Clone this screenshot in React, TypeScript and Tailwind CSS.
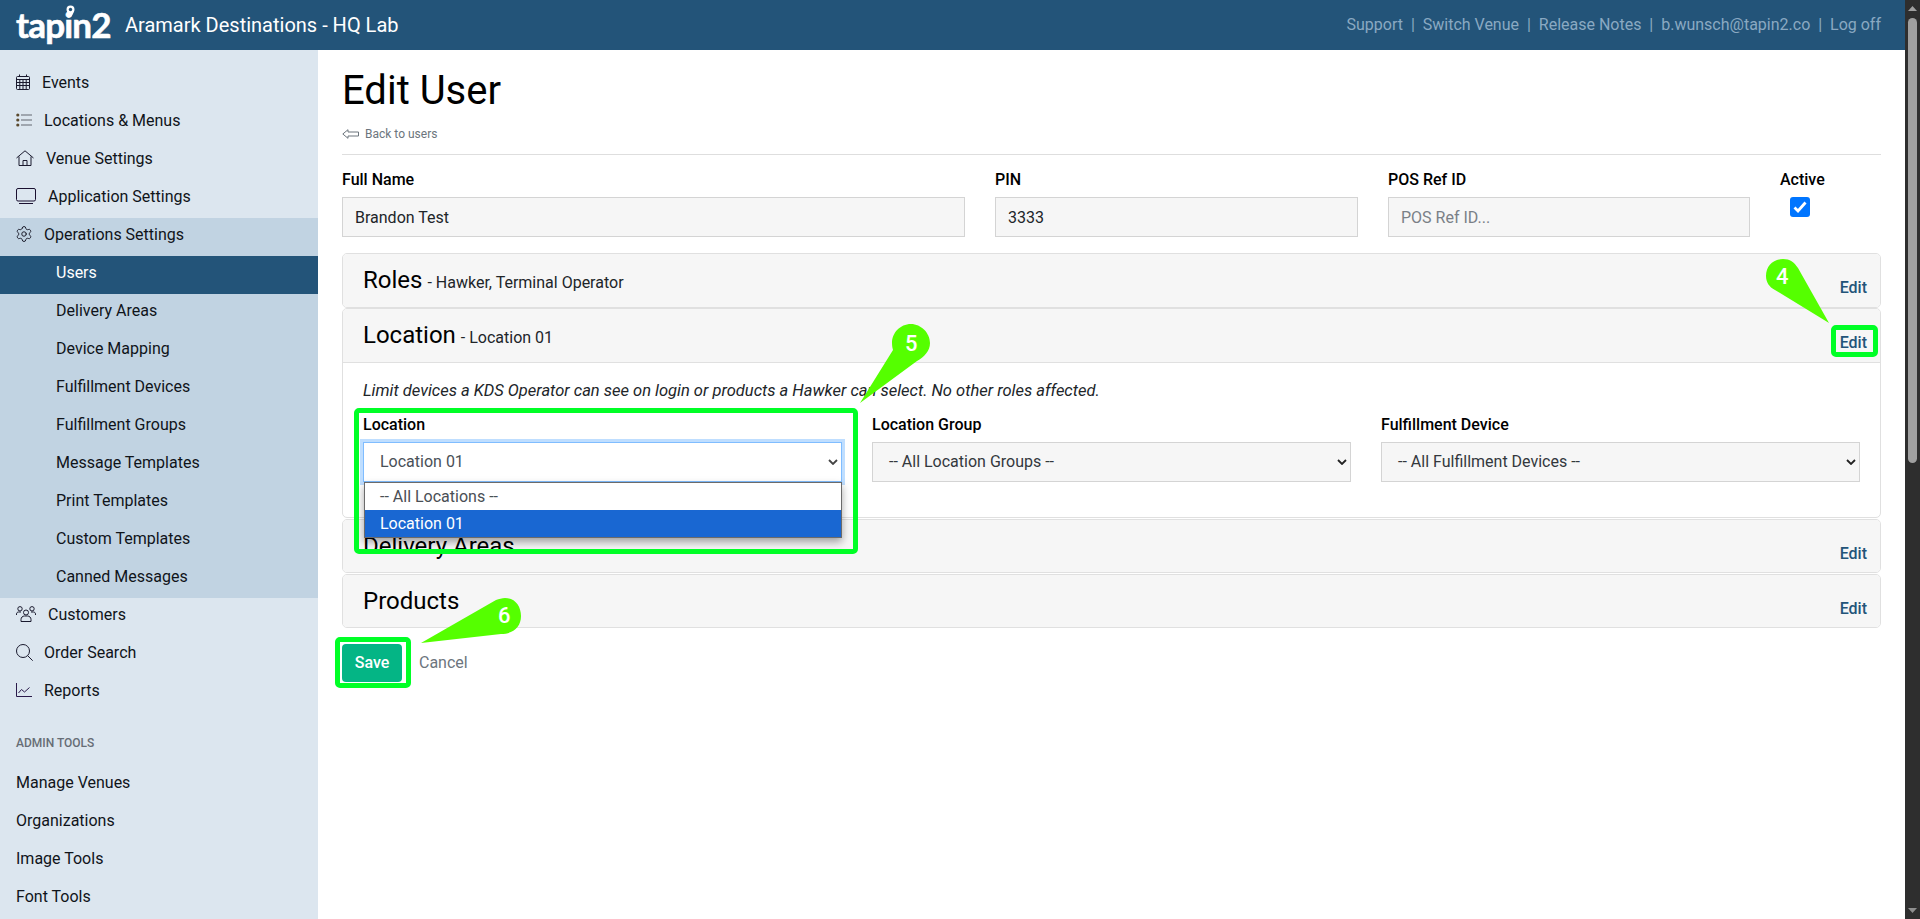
import React from "react";
import { Settings } from "lucide-react";

const sans = "font-['Roboto','Liberation_Sans',sans-serif]";

const CalIcon = () => (
  <svg width="14" height="16" viewBox="0 0 14 16" fill="none" stroke="#1a1a2e" strokeWidth="1">
    <rect x="0.5" y="2.5" width="13" height="13" rx="1" />
    <path d="M3.500 0.500v2M10.500 0.500v2M0.500 5.500h13M0.500 8.500h13M0.500 11.500h13M3.800 5.500v10M7 5.500v10M10.200 5.500v10" />
  </svg>
);
const ListIcon = () => (
  <svg width="16" height="14" viewBox="0 0 16 14">
    <circle cx="1.800" cy="2" r="1.600" fill="#5b4a2e" />
    <circle cx="1.800" cy="7" r="1.600" fill="#5b4a2e" />
    <circle cx="1.800" cy="12" r="1.600" fill="#5b4a2e" />
    <path d="M5 2h11M5 7h11M5 12h11" stroke="#8a919b" strokeWidth="1.500" />
  </svg>
);
const HomeIcon = () => (
  <svg width="18" height="16" viewBox="0 0 18 16" fill="none" stroke="#1a1a2e" strokeWidth="1">
    <path d="M0.500 8L9 0.800 17.500 8" />
    <path d="M3 6.500V15.500H15V6.500" />
    <path d="M7 15.500V10.500H11V15.500" />
  </svg>
);
const TvIcon = () => (
  <svg width="20" height="16" viewBox="0 0 20 16" fill="none" stroke="#1a1030" strokeWidth="1">
    <rect x="0.500" y="0.500" width="19" height="12.500" rx="1.500" />
    <path d="M3 15.500h14" />
  </svg>
);
const UsersIcon = () => (
  <svg width="20" height="16" viewBox="0 0 20 16" fill="none" stroke="#1a1a2e" strokeWidth="1">
    <circle cx="10" cy="6.500" r="2.500" />
    <circle cx="4" cy="2.800" r="2.200" />
    <circle cx="16" cy="2.800" r="2.200" />
    <path d="M5 15.500v-2c0-2 1.500-3.500 3.500-3.500h3c2 0 3.500 1.500 3.500 3.500v2z" />
    <path d="M0.500 9V8c0-1.200 1-2 2-2h2.500M19.500 9V8c0-1.200-1-2-2-2H15" />
  </svg>
);
const SearchIcon = () => (
  <svg width="17" height="17" viewBox="0 0 17 17" fill="none" stroke="#1a1a2e" strokeWidth="1">
    <circle cx="7" cy="7" r="6.500" />
    <path d="M11.700 11.700l5 5" />
  </svg>
);
const ChartIcon = () => (
  <svg width="16" height="14" viewBox="0 0 16 14" fill="none" stroke="#2a1a4a" strokeWidth="1">
    <path d="M0.500 0v13.500H16" />
    <path d="M2.500 10l3-3.500 3 2.500 5-4.500" />
  </svg>
);

function NavRow({ icon, label, iconW = "" }: { icon?: React.ReactNode; label: string; iconW?: string }) {
  return (
    <div className="h-[38px] pt-[5px] px-4 text-[16px] leading-[24px] text-[#10141a]">
      <div className="flex items-center h-[24px] -mt-[1px]">
        {icon && <span className={`flex items-center shrink-0 ${iconW}`}>{icon}</span>}
        <span className="mt-[1px]">{label}</span>
      </div>
    </div>
  );
}

function SubRow({ label, active }: { label: string; active?: boolean }) {
  return (
    <div className={`h-[38px] pt-[5px] pl-[56px] text-[16px] leading-[24px] ${active ? "bg-[#235479] text-white" : "text-[#10141a]"}`}>
      {label}
    </div>
  );
}

function Field({ label, value, placeholder, className = "" }: { label: string; value?: string; placeholder?: string; className?: string }) {
  return (
    <div className={`flex flex-col ${className}`}>
      <div className="text-[16px] leading-[24px] font-medium text-black">{label}</div>
      <div className={`mt-[5px] h-[40px] border border-[#d4d4d4] bg-[#f6f6f6] flex items-center pl-[12px] pt-[2px] text-[16px] ${value ? "text-[#212529]" : "text-[#7a8087]"}`}>
        {value ?? placeholder}
      </div>
    </div>
  );
}

function CardHead({ title, sub, border }: { title: string; sub?: string; border?: boolean }) {
  return (
    <div className={`bg-[#f6f6f6] flex pl-[20px] pr-[13px] ${border ? "h-[54px] border-b border-[#e0e0e0]" : "h-[52.5px]"}`}>
      <div className="pt-[8px] text-[24px] leading-[36px] text-black">
        {title}
        {sub && <span className="ml-[1px] text-[16px] text-[#212529]"> - {sub}</span>}
      </div>
      <div className="ml-auto pt-[22px] text-[16px] leading-[24px] font-medium text-[#235479]">Edit</div>
    </div>
  );
}

function Card({ children, className = "" }: { children: React.ReactNode; className?: string }) {
  return <div className={`border border-[#e0e0e0] rounded-[5px] overflow-hidden ${className}`}>{children}</div>;
}

function Chevron({ color }: { color: string }) {
  return (
    <svg className="ml-auto" width="10" height="6" viewBox="0 0 10 6" fill="none" stroke={color} strokeWidth="1.800"><path d="M1 1l4 4 4-4" /></svg>
  );
}

function SelectBox({ label, value }: { label: string; value: string }) {
  return (
    <div className="flex flex-col">
      <div className="text-[16px] leading-[24px] font-medium text-black">{label}</div>
      <div className="mt-[5px] h-[40px] border border-[#d4d4d4] bg-[#f6f6f6] flex items-center pl-[16px] pr-[3px] text-[16px] text-[#33383d]">
        <span>{value}</span>
        <Chevron color="#222" />
      </div>
    </div>
  );
}

function Callout({ left, top, w, h, d, digit, dx, dy }: { left: string; top: string; w: string; h: string; d: string; digit: string; dx: string; dy: string }) {
  return (
    <div className={`absolute ${left} ${top} ${w} ${h} pointer-events-none`}>
      <svg className="absolute inset-0" width="100%" height="100%"><path d={d} fill="#55ff00" /></svg>
      <span className={`absolute ${dx} ${dy} text-[22px] leading-[26px] font-medium text-white`}>{digit}</span>
    </div>
  );
}

const subs = ["Users", "Delivery Areas", "Device Mapping", "Fulfillment Devices", "Fulfillment Groups", "Message Templates", "Print Templates", "Custom Templates", "Canned Messages"];

export default function App() {
  return (
    <div className={`h-[919px] w-[1920px] overflow-hidden flex bg-white ${sans}`}>
      <div className="w-[1905px] flex flex-col relative">
        <header className="h-[50px] bg-[#235479] flex items-center pl-4 pr-[24px]">
          <div className="relative font-['Lato',sans-serif] font-bold text-[35px] leading-[50px] tracking-[-0.8px] text-white [-webkit-text-stroke:0.6px_white] w-[109px] -mt-[2px]">
            tapin2
            <svg className="absolute left-[50px] top-[6px]" width="9" height="13" viewBox="0 0 9 13">
              <path d="M4.500 0.500a4 4 0 0 1 4 4C8.500 7.500 4.500 12.500 4.500 12.500S.5 7.500.5 4.500a4 4 0 0 1 4-4z" fill="#fff" />
              <circle cx="4.500" cy="4.500" r="1.700" fill="#235479" />
            </svg>
          </div>
          <div className="text-[20px] text-white">Aramark Destinations - HQ Lab</div>
          <div className="ml-auto flex text-[16px] text-[#8aa9c2] whitespace-pre">
            Support  |  Switch Venue  |  Release Notes  |  b.wunsch@tapin2.co  |  Log off
          </div>
        </header>
        <div className="flex flex-1 min-h-0">
          <aside className="w-[318px] bg-[#dce6ef] pt-[16px] shrink-0">
            <NavRow icon={<CalIcon />} label="Events" iconW="w-[26px]" />
            <NavRow icon={<ListIcon />} label="Locations & Menus" iconW="w-[28px]" />
            <NavRow icon={<HomeIcon />} label="Venue Settings" iconW="w-[30px]" />
            <NavRow icon={<TvIcon />} label="Application Settings" iconW="w-[32px]" />
            <div className="bg-[#c1d3e2]">
              <NavRow icon={<Settings size={18} strokeWidth={1.200} className="text-[#10101e] -ml-[1px]" />} label="Operations Settings" iconW="w-[28px]" />
              {subs.map((s, i) => <SubRow key={s} label={s} active={i === 0} />)}
            </div>
            <NavRow icon={<UsersIcon />} label="Customers" iconW="w-[32px]" />
            <NavRow icon={<SearchIcon />} label="Order Search" iconW="w-[28px]" />
            <NavRow icon={<ChartIcon />} label="Reports" iconW="w-[28px]" />
            <div className="mt-[22px] px-4 text-[12px] leading-[18px] font-medium text-[#666d75]">ADMIN TOOLS</div>
            <div className="mt-[14px]">
              {["Manage Venues", "Organizations", "Image Tools", "Font Tools"].map((s) => <NavRow key={s} label={s} />)}
            </div>
          </aside>
          <main className="flex-1 px-[24px] pt-[17px] text-[#212529]">
            <h1 className="text-[40px] leading-[48px] text-black">Edit User</h1>
            <div className="mt-[10px] flex items-center text-[12px] leading-[18px] text-[#6c757d]">
              <svg width="17" height="10" viewBox="0 0 17 10" fill="none" stroke="#6c757d" className="mr-[6px]"><path d="M6 .7L.8 5 6 9.300V7h10.500V3H6z" /></svg>
              Back to users
            </div>
            <div className="mt-[11px] border-t border-[#dedede] h-0" />
            <div className="mt-[13px] flex">
              <Field label="Full Name" value="Brandon Test" className="w-[623px] mr-[30px]" />
              <Field label="PIN" value="3333" className="w-[363px] mr-[30px]" />
              <Field label="POS Ref ID" placeholder="POS Ref ID..." className="w-[362px] mr-[30px]" />
              <div className="flex flex-col">
                <div className="text-[16px] leading-[24px] font-medium text-black">Active</div>
                <div className="mt-[5px] ml-[10px] w-[20px] h-[20px] rounded-[3px] bg-[#0075ff] flex items-center justify-center">
                  <svg width="14" height="12" viewBox="0 0 14 12" fill="none" stroke="#fff" strokeWidth="2.800"><path d="M1.500 6.500l3.500 3.500 7.500-8.500" /></svg>
                </div>
              </div>
            </div>
            <div className="mt-[16px] flex flex-col gap-[0.5px]">
              <Card><CardHead title="Roles" sub="Hawker, Terminal Operator" /></Card>
              <Card>
                <CardHead title="Location" sub="Location 01" border />
                <div className="px-[20px] pt-[16px] h-[154px]">
                  <div className="italic text-[16.5px] leading-[24px] text-[#212529]">Limit devices a KDS Operator can see on login or products a Hawker can select. No other roles affected.</div>
                  <div className="mt-[10px] grid grid-cols-3 gap-[30px]">
                    <div className="flex flex-col">
                      <div className="text-[16px] leading-[24px] font-medium text-black">Location</div>
                      <div className="mt-[5px] h-[40px] border border-[#80bdff] shadow-[0_0_0_3px_rgba(0,123,255,0.25)] bg-white flex items-center pl-[16px] pr-[3px] text-[16px] text-[#495057]">
                        <span>Location 01</span>
                        <Chevron color="#444" />
                      </div>
                    </div>
                    <SelectBox label="Location Group" value="-- All Location Groups --" />
                    <SelectBox label="Fulfillment Device" value="-- All Fulfillment Devices --" />
                  </div>
                </div>
              </Card>
              <Card><CardHead title="Delivery Areas" /></Card>
              <Card><CardHead title="Products" /></Card>
            </div>
            <div className="mt-[16px] flex items-center">
              <div className="w-[60px] h-[38px] rounded-[4px] bg-[#04b585] flex items-center justify-center text-[16px] font-medium text-white">Save</div>
              <div className="ml-[17px] text-[16px] text-[#6c757d]">Cancel</div>
            </div>
          </main>
        </div>

        {/* open select list */}
        <div className="absolute left-[364px] top-[482px] w-[478px] h-[56px] bg-white border border-[#6b6b6b] shadow-[0_4px_8px_rgba(0,0,0,0.35)] text-[16px] leading-[27px] text-[#4a4f55]">
          <div className="h-[27px] pl-[15px]">-- All Locations --</div>
          <div className="h-[27px] pl-[15px] bg-[#1967d2] text-white">Location 01</div>
        </div>

        {/* annotations */}
        <div className="absolute left-[1831px] top-[325px] w-[47px] h-[32px] border-[5px] border-[#00ff26] rounded-[5px]" />
        <div className="absolute left-[354px] top-[408px] w-[504px] h-[146px] border-[5px] border-[#00ff26] rounded-[5px]" />
        <div className="absolute left-[335px] top-[637px] w-[76px] h-[51px] border-[5px] border-[#00ff26] rounded-[5px]" />
        <Callout left="left-[1765px]" top="top-[258px]" w="w-[70px]" h="h-[70px]" dx="left-[11px]" dy="top-[6px]"
          d="M18 1C8 1 1 8 1 18c0 6 3 11 9 14l54 33L33 10C29 4 25 1 18 1z" digit="4" />
        <Callout left="left-[850px]" top="top-[324px]" w="w-[90px]" h="h-[84px]" dx="left-[55px]" dy="top-[7px]"
          d="M61 0C50 0 42 9 42 19C42 22 42.500 24 43 26L10 79L67 37C74 33 80 27 80 19C80 9 71 0 61 0z" digit="5" />
        <Callout left="left-[415px]" top="top-[597px]" w="w-[110px]" h="h-[50px]" dx="left-[83px]" dy="top-[6px]"
          d="M90 1c-3 0-6 1-9 2L6 46l80-9c12 0 20-7 20-18C106 9 100 1 90 1z" digit="6" />
      </div>
      {/* page scrollbar */}
      <div className="w-[15px] bg-[#2e2e2e] relative">
        <div className="absolute left-[3px] top-[18px] w-[9px] h-[445px] rounded-[5px] bg-[#a0a0a0]" />
        <svg className="absolute left-[3px] top-[6px]" width="9" height="6"><path d="M4.500 0L9 5H0z" fill="#a0a0a0" /></svg>
        <svg className="absolute left-[3px] bottom-[6px]" width="9" height="6"><path d="M4.500 6L9 1H0z" fill="#8f8f8f" /></svg>
      </div>
    </div>
  );
}
